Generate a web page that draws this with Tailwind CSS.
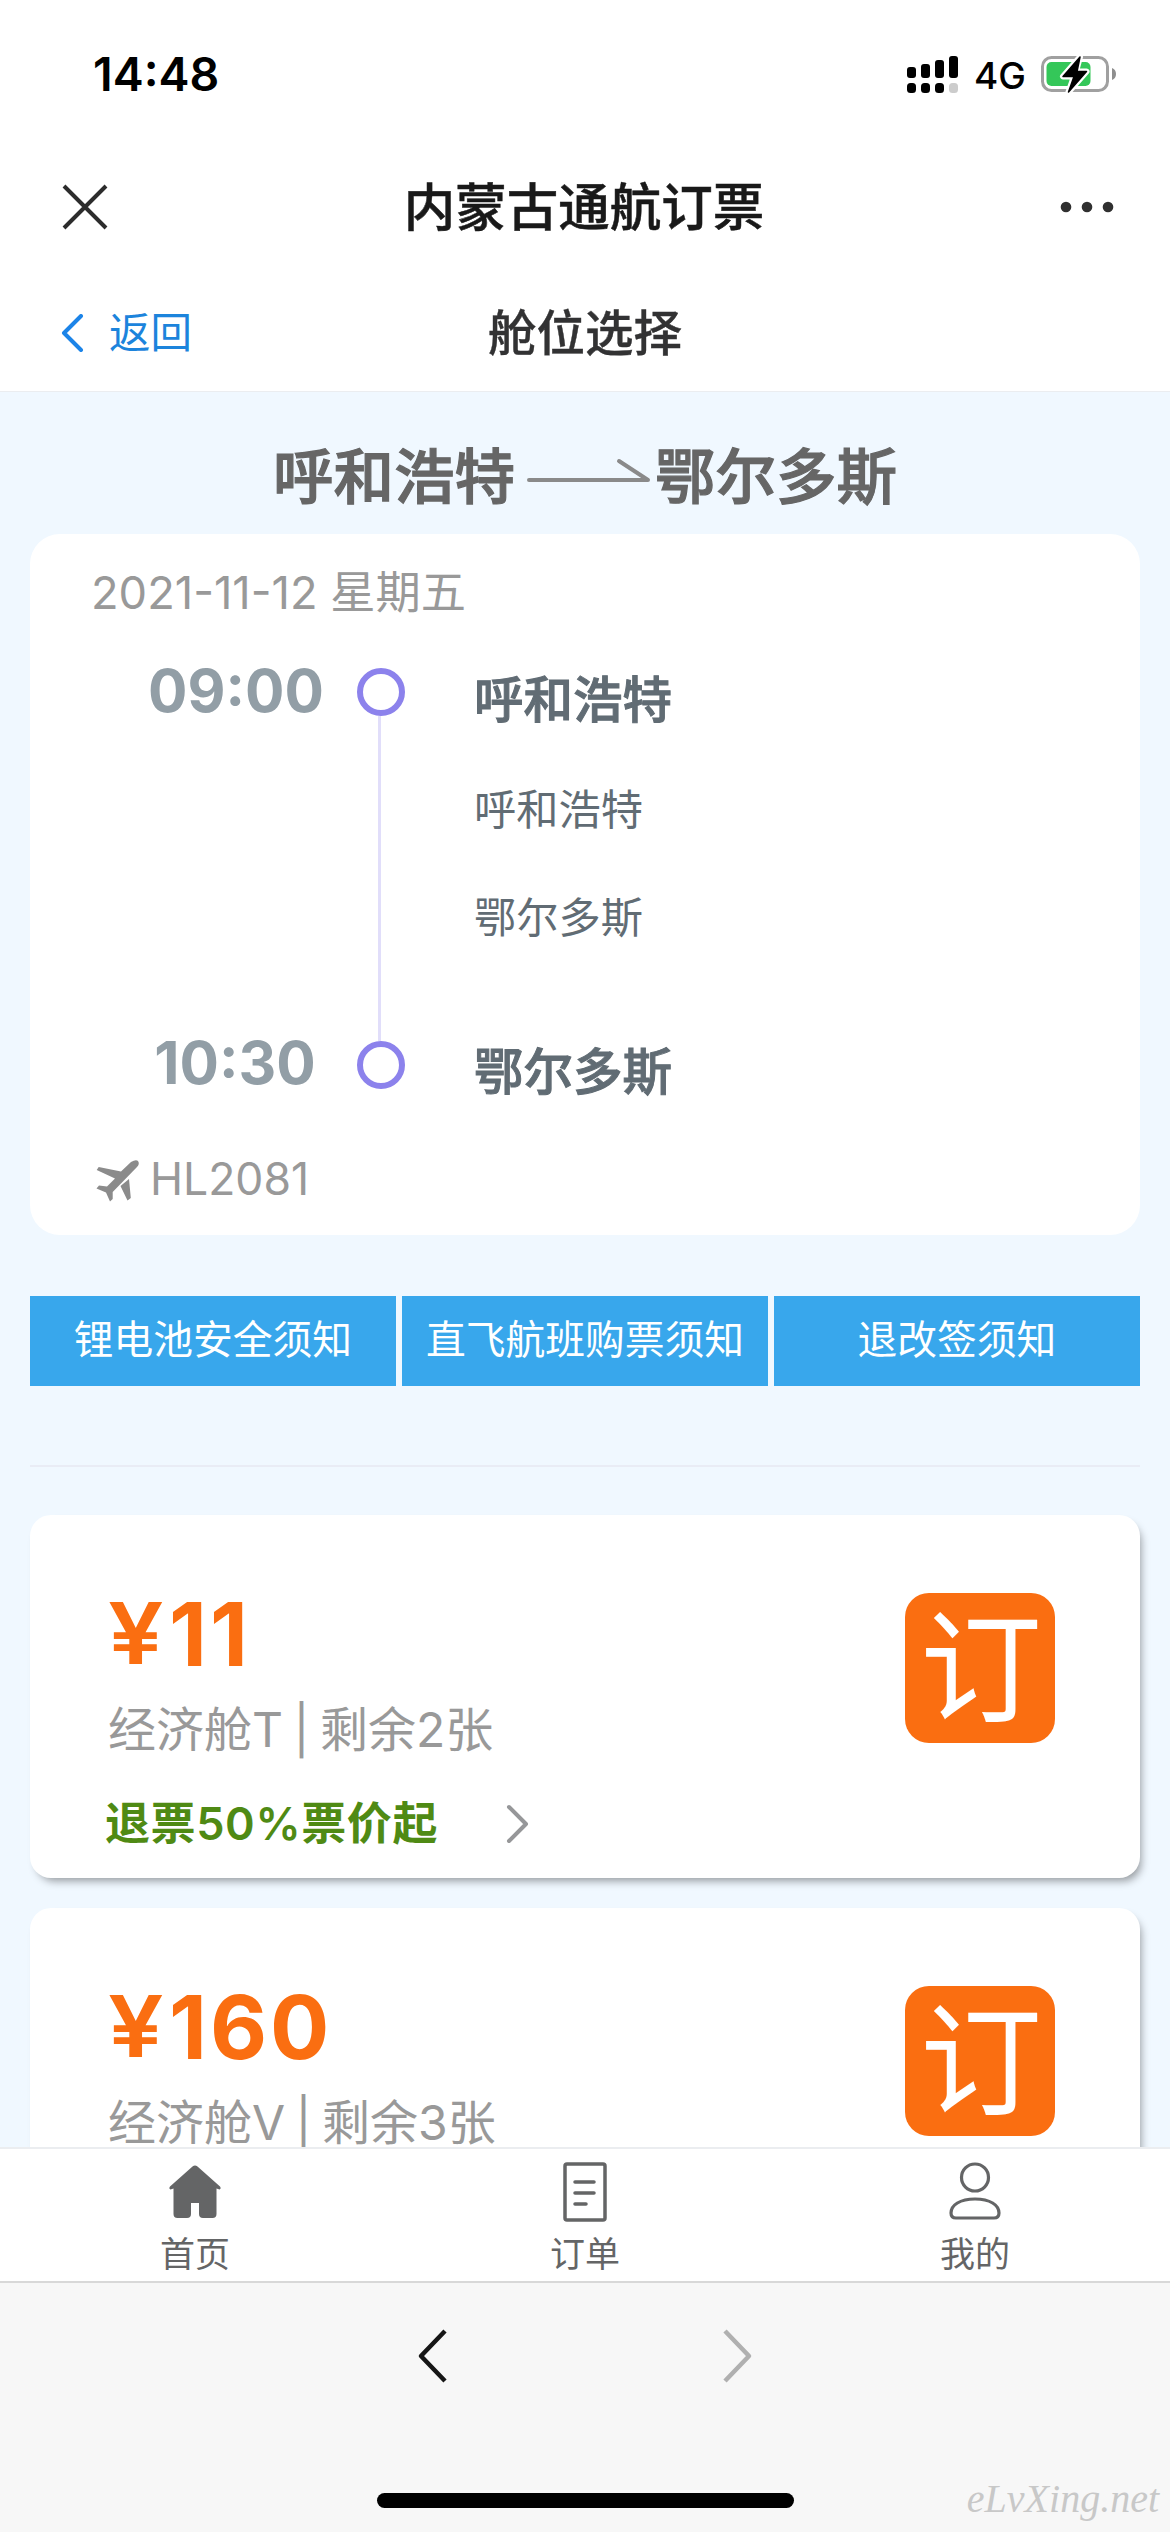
<!DOCTYPE html>
<html lang="zh-CN">
<head>
<meta charset="utf-8">
<title>舱位选择</title>
<script src="https://cdn.jsdelivr.net/npm/@tailwindcss/browser@4"></script>
</head>
<body class="w-[1170px] h-[2532px] overflow-hidden bg-white font-['Inter','Noto_Sans_CJK_SC',sans-serif] flex flex-col whitespace-nowrap">
  <!-- status bar -->
  <div class="h-[141px] shrink-0 flex items-start pt-[47px] pl-[93px]">
    <div class="w-[814px] text-[46.500px] leading-[54px] font-semibold text-black">14:48</div>
    <svg class="mt-[9px] shrink-0" width="52" height="38" viewBox="0 0 52 38"><g fill="#000"><rect x="0" y="11" width="9" height="11" rx="3"/><rect x="14" y="8" width="9" height="14" rx="3"/><rect x="28" y="4" width="9" height="18" rx="3"/><rect x="42" y="0" width="9" height="22" rx="3"/><rect x="0" y="27" width="9" height="10" rx="3.5"/><rect x="14" y="27" width="9" height="10" rx="3.5"/><rect x="28" y="27" width="9" height="10" rx="3.5"/></g><rect x="42" y="27" width="9" height="10" rx="3.5" fill="#ccc"/></svg>
    <div class="ml-[15px] w-[66px] pt-[2px] text-[37px] leading-[54px] font-medium text-black">4G</div>
    <svg class="mt-[7px] shrink-0" width="78" height="42" viewBox="0 0 78 42"><rect x="2.5" y="3.5" width="65" height="33" rx="9" fill="#fff" stroke="#a0a0a0" stroke-width="3"/><path d="M72 14q4 1.500 4 6t-4 6z" fill="#8e8e8e"/><rect x="6.500" y="8" width="44" height="24" rx="5" fill="#34c759"/><path d="M40 3L23 22.500h11L28.500 38l18-20.500H36z" fill="#000" stroke="#fff" stroke-width="6" stroke-linejoin="round"/><path d="M40 3L23 22.500h11L28.500 38l18-20.500H37z" fill="#000" stroke="#000" stroke-width="1.500" stroke-linejoin="round"/></svg>
  </div>
  <!-- title bar -->
  <div class="h-[132px] shrink-0 flex items-center justify-between pl-[62px] pr-[56px]">
    <svg width="46" height="46" viewBox="0 0 46 46" fill="none" stroke="#2c2c2c" stroke-width="4"><path d="M2 2l42 42M44 2L2 44"/></svg>
    <div class="text-[51.500px] leading-[60px] font-medium text-[#191919] [-webkit-text-stroke:0.5px_#191919]">内蒙古通航订票</div>
    <svg width="54" height="12" viewBox="0 0 54 12" fill="#303030"><circle cx="6" cy="6" r="5.300"/><circle cx="27" cy="6" r="5.300"/><circle cx="48" cy="6" r="5.300"/></svg>
  </div>
  <!-- page nav -->
  <div class="h-[119px] shrink-0 grid grid-cols-3 items-center pl-[60px] pr-[60px] pt-[2px] border-b border-[#ebedf0]">
    <div class="flex items-center gap-[25px] text-[41.500px] leading-[60px] text-[#1c84dc]">
      <svg width="24" height="38" viewBox="0 0 24 38" fill="none" stroke="#1c84e8" stroke-width="4" stroke-linejoin="round" stroke-linecap="round"><path d="M21 2L4 19l17 17"/></svg>
      <span>返回</span>
    </div>
    <div class="pt-[2px] text-center text-[48.500px] leading-[60px] font-medium text-[#323233] [-webkit-text-stroke:0.4px_#323233]">舱位选择</div>
  </div>
  <!-- page body -->
  <main class="h-[1755px] shrink-0 overflow-hidden bg-[#f0f8ff] px-[30px]">
    <div class="h-[142px] pt-[49px] flex justify-center text-[60.500px] leading-[72px] font-medium text-[#666] [-webkit-text-stroke:1.2px_#666]">
      <span>呼和浩特</span>
      <svg class="ml-[4px] mr-[4px] mt-[13px]" width="132" height="50" viewBox="0 0 132 50" fill="none" stroke="#8a8a8a" stroke-width="4" stroke-linecap="round" stroke-linejoin="round"><path d="M10 26h119L100 7"/></svg>
      <span>鄂尔多斯</span>
    </div>
    <section class="h-[701px] rounded-[30px] bg-white pt-[29px] pl-[61px]">
      <div class="text-[45.250px] leading-[60px] text-[#999]">2021-11-12 星期五</div>
      <div class="mt-[40px] h-[435px] flex">
        <div class="w-[252px] flex flex-col justify-between text-center text-[58.500px] leading-[60px] font-bold text-[#929ea6] pb-[5px] pl-[38px]">
          <div class="-mt-[2px]">09:00</div>
          <div class="pr-[2px]">10:30</div>
        </div>
        <div class="w-[76px] flex flex-col items-center pt-[5px]">
          <div class="size-[48px] rounded-full border-[6px] border-[#8c82ec]"></div>
          <div class="w-[3px] h-[325px] mr-[3px] bg-[#e1defa]"></div>
          <div class="size-[48px] rounded-full border-[6px] border-[#8c82ec]"></div>
        </div>
        <div class="ml-[55px] text-[#616c74]">
          <div class="h-[72px] pt-[7px] text-[49.500px] leading-[60px] font-medium [-webkit-text-stroke:1px_#616c74]">呼和浩特</div>
          <div class="h-[108px] pt-[45px] text-[42.250px] leading-[60px]">呼和浩特</div>
          <div class="h-[193px] pt-[45px] text-[42.250px] leading-[60px]">鄂尔多斯</div>
          <div class="pt-[6px] text-[49.500px] leading-[60px] font-medium [-webkit-text-stroke:1px_#616c74]">鄂尔多斯</div>
        </div>
      </div>
      <div class="mt-[51px] flex items-center text-[44.500px] leading-[60px] text-[#999]">
        <svg class="ml-[4px] mt-[4px] mr-[9px]" width="46" height="44" viewBox="0 0 46 44" fill="#8b8b8b"><path d="M36 3q5-3 7-1 2 3-1 6L17.700 33v7L15 42.500 11 33.500 1.500 29.500 4 26.500l8 1 8-8L1.700 11l2-3L26 12.500zM34 20l1.800 19-3.300 2.500-7-14.500z"/></svg>
        <span>HL2081</span>
      </div>
    </section>
    <div class="mt-[61px] grid grid-cols-3 gap-[6px] text-center text-[39.750px] leading-[88px] text-white">
      <div class="h-[90px] bg-[#38a7ec]">锂电池安全须知</div>
      <div class="h-[90px] bg-[#38a7ec]">直飞航班购票须知</div>
      <div class="h-[90px] bg-[#38a7ec]">退改签须知</div>
    </div>
    <div class="mt-[79px] h-[2px] bg-[#e9ecf5]"></div>
    <article class="mt-[48px] h-[363px] rounded-[21px] bg-white shadow-[4px_6px_9px_-3px_rgba(0,0,0,0.38)] flex justify-between pl-[78px] pr-[85px]">
      <div>
        <div class="mt-[69px] flex text-[88px] leading-[100px] font-bold text-[#fa6e11] tracking-[3px]"><span class="inline-block w-[61px] origin-left scale-x-[1.16] text-[85px] font-semibold tracking-normal">¥</span><span>11</span></div>
        <div class="mt-[16px] text-[48px] leading-[60px] text-[#999] [word-spacing:-3px]">经济舱T | 剩余2张</div>
        <div class="mt-[34px] -ml-[3px] flex items-center gap-[68px] text-[45px] leading-[60px] font-semibold text-[#4f8a14]">
          <span class="tracking-[0.6px]">退票50%票价起</span>
          <svg width="24" height="40" viewBox="0 0 24 40" fill="none" stroke="#969799" stroke-width="4" stroke-linecap="round" stroke-linejoin="round"><path d="M3 3l17 17L3 37"/></svg>
        </div>
      </div>
      <div class="mt-[78px] size-[150px] rounded-[24px] bg-[#fa6e11] text-center text-[122px] leading-[150px] text-white indent-[2px]">订</div>
    </article>
    <article class="mt-[30px] h-[363px] rounded-[21px] bg-white shadow-[4px_6px_9px_-3px_rgba(0,0,0,0.38)] flex justify-between pl-[78px] pr-[85px]">
      <div>
        <div class="mt-[69px] flex text-[88px] leading-[100px] font-bold text-[#fa6e11] tracking-[3px]"><span class="inline-block w-[61px] origin-left scale-x-[1.16] text-[85px] font-semibold tracking-normal">¥</span><span>160</span></div>
        <div class="mt-[16px] text-[48px] leading-[60px] text-[#999] [word-spacing:-3px]">经济舱V | 剩余3张</div>
      </div>
      <div class="mt-[78px] size-[150px] rounded-[24px] bg-[#fa6e11] text-center text-[122px] leading-[150px] text-white indent-[2px]">订</div>
    </article>
  </main>
  <!-- tab bar -->
  <nav class="h-[134px] shrink-0 border-t-2 border-[#ebedf0] grid grid-cols-3 text-center text-[35px] leading-[44px] text-[#646566]">
    <div class="flex flex-col items-center pt-[12px]">
      <svg width="60" height="62" viewBox="0 0 60 62" fill="#646566"><path d="M27.500 5.500q2.500-2 5 0L55 25.500q1.500 2-.5 3l-3-1V53q0 4-4 4H38q-4 0-4-4V42h-8v11q0 4-4 4h-9.500q-4 0-4-4V27.500l-3 1q-2-1-.5-3z"/></svg>
      <div class="mt-[9px]">首页</div>
    </div>
    <div class="flex flex-col items-center pt-[12px]">
      <svg width="60" height="62" viewBox="0 0 60 62" fill="none" stroke="#646566" stroke-width="3.500" stroke-linecap="round"><rect x="10" y="3" width="40" height="56" rx="2"/><path d="M20 21h19M20 32h19M20 43h11"/></svg>
      <div class="mt-[9px]">订单</div>
    </div>
    <div class="flex flex-col items-center pt-[12px]">
      <svg width="60" height="62" viewBox="0 0 60 62" fill="none" stroke="#646566" stroke-width="3.200"><circle cx="30" cy="16.500" r="13.500"/><path d="M30 38c15 0 24 6 24 14q0 5-5 5H11q-5 0-5-5c0-8 9-14 24-14z"/></svg>
      <div class="mt-[9px]">我的</div>
    </div>
  </nav>
  <!-- browser toolbar -->
  <footer class="h-[251px] shrink-0 relative bg-[#f7f7f7] border-t-2 border-[#d8d8d8] flex flex-col items-center">
    <div class="mt-[46px] flex gap-[270px]">
      <svg width="34" height="54" viewBox="0 0 34 54" fill="none" stroke="#161616" stroke-width="4.500" stroke-linejoin="round"><path d="M29 2L5 27l24 25"/></svg>
      <svg width="34" height="54" viewBox="0 0 34 54" fill="none" stroke="#b0b0b0" stroke-width="4.500" stroke-linejoin="round"><path d="M5 2l24 25L5 52"/></svg>
    </div>
    <div class="mt-[110px] ml-[1px] w-[417px] h-[15px] rounded-full bg-black"></div>
    <div class="absolute right-[11px] bottom-[11px] text-[40px] leading-[44px] italic text-[#c8c8c8] font-['Liberation_Serif',cursive]">eLvXing.net</div>
  </footer>
</body>
</html>
